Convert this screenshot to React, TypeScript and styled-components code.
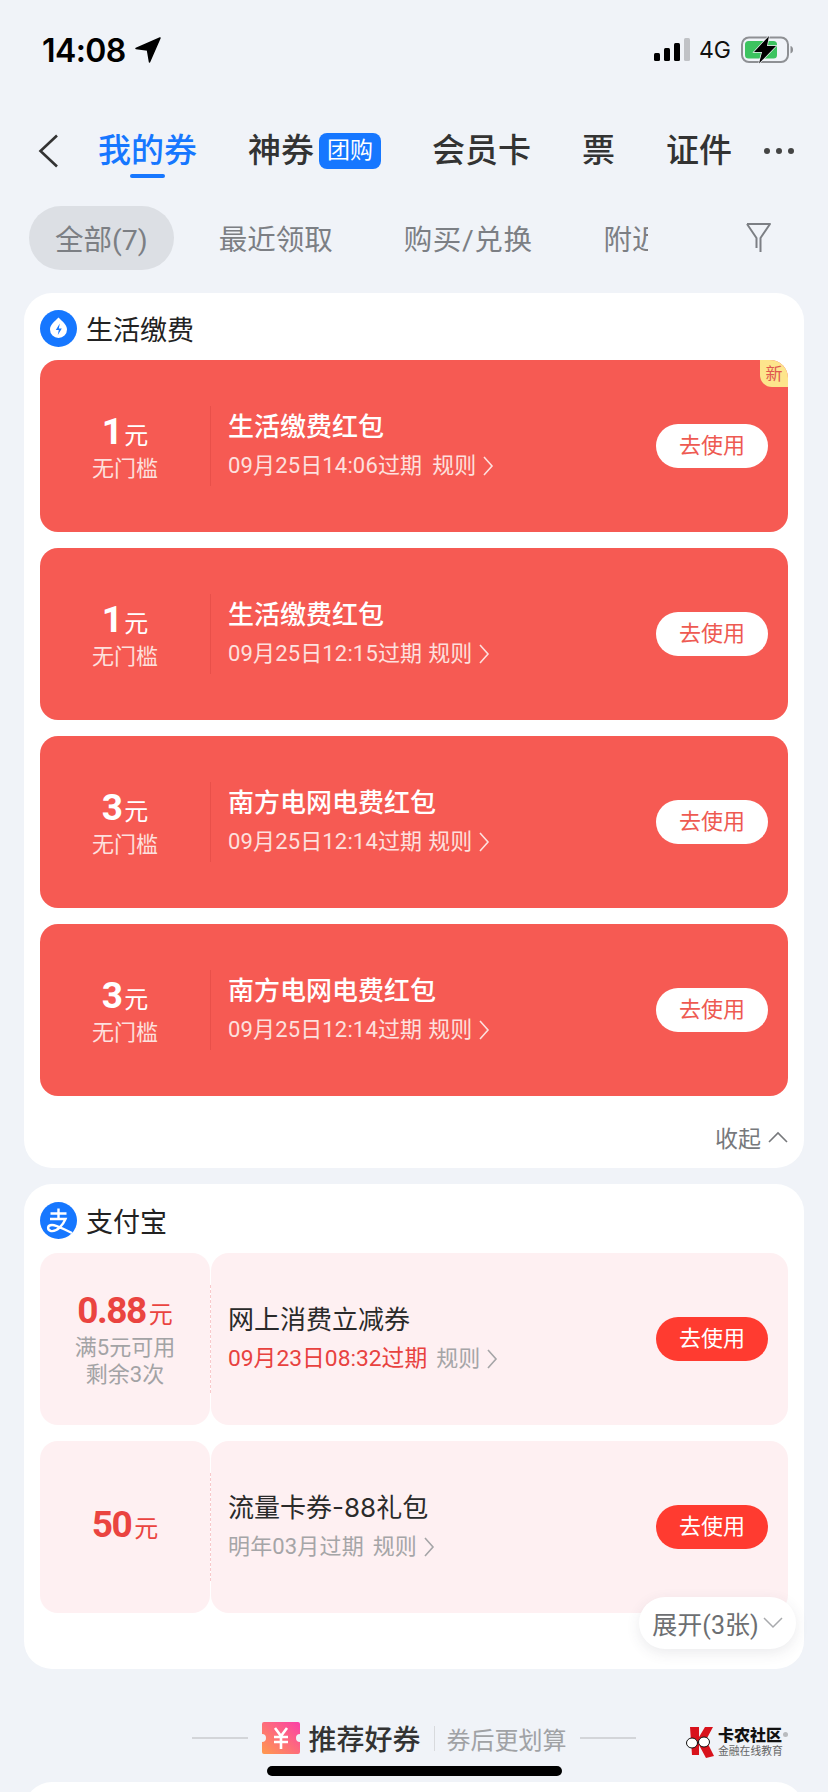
import React from "react";
import styled, { createGlobalStyle } from "styled-components";

const FONT = `Roboto, "Noto Sans CJK SC", sans-serif`;

const Global = createGlobalStyle`
  html, body { margin: 0; padding: 0; background: #f0f3f8; }
  body { font-family: ${FONT}; }
`;

const Screen = styled.div`
  position: relative;
  width: 828px;
  height: 1792px;
  overflow: hidden;
  background: #f0f3f8;
  color: #333;
`;

const StatusBar = styled.div`
  height: 100px;
  display: flex;
  align-items: center;
  padding: 0 33px 0 42px;
  box-sizing: border-box;
`;
const Time = styled.span`
  font-family: Inter, sans-serif;
  font-size: 32px;
  font-weight: 600;
  color: #000;
  letter-spacing: -0.6px;
`;
const LocationIcon = styled.svg`
  width: 26px;
  height: 26px;
  margin-left: 9px;
`;
const StatusRight = styled.div`
  margin-left: auto;
  display: flex;
  align-items: center;
`;
const Net = styled.span`
  font-family: Inter, sans-serif;
  font-size: 23px;
  font-weight: 400;
  color: #111;
  margin: 0 10px 0 8px;
`;

const Tabs = styled.div`
  height: 100px;
  display: flex;
  align-items: center;
  gap: 51px;
  padding: 1px 0 0 38px;
  box-sizing: border-box;
`;
const BackIcon = styled.svg`
  width: 21px;
  height: 34px;
  margin-right: -12px;
`;
const Tab = styled.div<{ $active?: boolean }>`
  position: relative;
  display: flex;
  align-items: center;
  font-size: 33px;
  line-height: 44px;
  font-weight: 500;
  color: ${(p) => (p.$active ? "#1677ff" : "#333")};
  ${(p) =>
    p.$active &&
    `&::after {
      content: "";
      position: absolute;
      left: 32px;
      width: 35px;
      height: 4px;
      top: 45px;
      border-radius: 2px;
      background: #1677ff;
    }`}
`;
const TabBadge = styled.span`
  margin-left: 5px;
  width: 62px;
  height: 36px;
  border-radius: 8px;
  background: #1677ff;
  color: #fff;
  font-size: 23px;
  font-weight: 400;
  line-height: 36px;
  text-align: center;
`;
const More = styled.div`
  margin-left: -19px;
  display: flex;
  gap: 6px;
  & > i {
    width: 6px;
    height: 6px;
    border-radius: 50%;
    background: #444;
  }
`;

const FilterRow = styled.div`
  margin-top: 6px;
  height: 64px;
  display: flex;
  align-items: center;
  padding-left: 29px;
`;
const FilterScroller = styled.div`
  width: 619px;
  display: flex;
  gap: 19px;
  overflow: hidden;
  flex: none;
`;
const Filter = styled.div<{ $on?: boolean; $wide?: boolean }>`
  flex: none;
  padding: 0 26px 2px;
  box-sizing: border-box;
  height: 64px;
  border-radius: 32px;
  display: flex;
  align-items: center;
  font-size: 28.5px;
  letter-spacing: ${(p) => (p.$wide ? "0.6px" : "0")};
  color: #7c7f84;
  white-space: nowrap;
  background: ${(p) => (p.$on ? "#dcdfe4" : "transparent")};
`;
const FunnelIcon = styled.svg`
  width: 27px;
  height: 32px;
  margin-left: 97px;
  flex: none;
`;

const Card = styled.section<{ $top: number; $bottom: number }>`
  margin: ${(p) => p.$top}px 24px 0;
  background: #fff;
  border-radius: 28px;
  padding: 0 16px ${(p) => p.$bottom}px;
`;
const CardHead = styled.div<{ $h: number }>`
  height: ${(p) => p.$h}px;
  padding-top: 3px;
  box-sizing: border-box;
  display: flex;
  align-items: center;
  gap: 9px;
  font-size: 27px;
  font-weight: 400;
  color: #222;
`;
const HeadIcon = styled.svg`
  width: 37px;
  height: 37px;
  flex: none;
`;
const CouponList = styled.div`
  display: flex;
  flex-direction: column;
  gap: 16px;
`;
const Coupon = styled.article<{ $light?: boolean }>`
  position: relative;
  height: 172px;
  display: flex;
  align-items: center;
  border-radius: 18px;
  background: ${(p) => (p.$light ? "transparent" : "#f65a53")};
  color: ${(p) => (p.$light ? "#333" : "#fff")};
`;
const Stub = styled.div<{ $light?: boolean }>`
  position: relative;
  width: 170px;
  height: 100%;
  flex: none;
  display: flex;
  flex-direction: column;
  align-items: center;
  justify-content: center;
  border-radius: 18px;
  background: ${(p) => (p.$light ? "#fef0f2" : "transparent")};
  ${(p) =>
    p.$light &&
    `&::after {
      content: "";
      position: absolute;
      right: -1px;
      top: 32px;
      bottom: 32px;
      border-right: 1px dashed #f8c9cb;
    }`}
`;
const Amount = styled.div<{ $light?: boolean }>`
  display: flex;
  align-items: baseline;
  justify-content: center;
  line-height: 42px;
  font-size: 37px;
  font-weight: 700;
  letter-spacing: -1.5px;
  color: ${(p) => (p.$light ? "#ea4440" : "#fff")};
  & > small {
    font-size: 24px;
    font-weight: 400;
    letter-spacing: 0;
    margin-left: 3px;
  }
`;
const StubNote = styled.div<{ $light?: boolean }>`
  font-size: 22px;
  line-height: 27px;
  margin-top: 0;
  text-align: center;
  color: ${(p) => (p.$light ? "#a3a3a5" : "#fde0de")};
  ${Amount} + & {
    margin-top: -2px;
  }
`;
const VDivider = styled.div`
  width: 1px;
  height: 80px;
  background: #e8504a;
  flex: none;
`;
const Body = styled.div<{ $light?: boolean }>`
  flex: 1;
  height: 100%;
  margin-left: ${(p) => (p.$light ? "1px" : "0")};
  padding: 0 20px 0 17px;
  display: flex;
  align-items: center;
  border-radius: 18px;
  background: ${(p) => (p.$light ? "#fef0f2" : "transparent")};
`;
const Info = styled.div`
  flex: 1;
  min-width: 0;
  padding-bottom: 3px;
`;
const Title = styled.div<{ $light?: boolean }>`
  font-size: 26px;
  line-height: 36px;
  font-weight: ${(p) => (p.$light ? 400 : 500)};
  white-space: nowrap;
  font-family: ${(p) => (p.$light ? `Inter, "Noto Sans CJK SC", sans-serif` : "inherit")};
  color: ${(p) => (p.$light ? "#2a2a2a" : "#fff")};
`;
const Meta = styled.div<{ $light?: boolean }>`
  margin-top: 6px;
  display: flex;
  align-items: center;
  font-size: 22px;
  line-height: 30px;
  color: ${(p) => (p.$light ? "#a5a5a7" : "#fde0de")};
`;
const Expiry = styled.span<{ $urgent?: boolean }>`
  color: ${(p) => (p.$urgent ? "#e8423f" : "inherit")};
  font-size: ${(p) => (p.$urgent ? "22.8px" : "22px")};
  letter-spacing: ${(p) => (p.$urgent ? "0" : "0.15px")};
  white-space: nowrap;
`;
const Rule = styled.span<{ $gap: number }>`
  margin-left: ${(p) => p.$gap}px;
  white-space: nowrap;
`;
const RuleChevron = styled.svg`
  width: 12px;
  height: 20px;
  margin-left: 6px;
`;
const UseButton = styled.div<{ $light?: boolean }>`
  width: 112px;
  height: 44px;
  border-radius: 22px;
  flex: none;
  text-align: center;
  line-height: 44px;
  font-size: 22px;
  background: ${(p) => (p.$light ? "#ff3b30" : "#fff")};
  color: ${(p) => (p.$light ? "#fff" : "#ee5a52")};
`;
const NewTag = styled.span`
  position: absolute;
  right: 0;
  top: 0;
  width: 28px;
  height: 27px;
  border-radius: 0 18px 0 12px;
  background: #fde58c;
  color: #e0584e;
  font-size: 17px;
  line-height: 28px;
  text-align: center;
`;
const Collapse = styled.div`
  height: 72px;
  padding-top: 10px;
  box-sizing: border-box;
  display: flex;
  align-items: center;
  justify-content: flex-end;
  gap: 7px;
  font-size: 23px;
  color: #77797c;
`;
const ChevronSmall = styled.svg`
  width: 20px;
  height: 12px;
`;
const Expand = styled.div`
  position: absolute;
  left: 639px;
  top: 1597px;
  width: 157px;
  height: 52px;
  border-radius: 26px;
  background: #fff;
  box-shadow: 0 4px 14px rgba(60, 60, 80, 0.1);
  display: flex;
  align-items: center;
  justify-content: center;
  gap: 4px;
  font-size: 25px;
  color: #6d6f72;
  white-space: nowrap;
`;
const Recommend = styled.div`
  margin-top: 49px;
  height: 40px;
  display: flex;
  align-items: center;
  justify-content: center;
`;
const Rule2 = styled.i`
  width: 56px;
  height: 2px;
  background: #d3d5d9;
`;
const TicketIcon = styled.svg`
  width: 40px;
  height: 32px;
  margin: 0 7px 0 13px;
`;
const RecTitle = styled.span`
  font-size: 28px;
  font-weight: 500;
  color: #333;
`;
const RecSep = styled.i`
  width: 1px;
  height: 25px;
  background: #d8dadd;
  margin: 0 12px 0 13px;
`;
const RecSub = styled.span`
  font-size: 24px;
  color: #a0a2a5;
  margin-right: 13px;
`;
const NextCard = styled.div`
  margin: 24px 24px 0;
  height: 60px;
  background: #fff;
  border-radius: 28px;
`;
const HomeBar = styled.div`
  position: absolute;
  left: 267px;
  top: 1766px;
  width: 295px;
  height: 10px;
  border-radius: 5px;
  background: #000;
`;
const Watermark = styled.div`
  position: absolute;
  left: 685px;
  top: 1725px;
  display: flex;
  align-items: center;
  gap: 2px;
`;
const MarkIcon = styled.svg`
  width: 31px;
  height: 33px;
`;
const MarkText = styled.div`
  display: flex;
  flex-direction: column;
`;
const MarkName = styled.span`
  font-size: 16px;
  line-height: 19px;
  font-weight: 900;
  color: #111;
  white-space: nowrap;
  &::after {
    content: "";
    display: inline-block;
    width: 5px;
    height: 5px;
    margin-left: 1px;
    border-radius: 50%;
    background: #b9bbbe;
    vertical-align: 4px;
  }
`;
const MarkSub = styled.span`
  font-size: 10.8px;
  line-height: 13px;
  color: #666;
  white-space: nowrap;
`;

const Chev = () => (
  <RuleChevron viewBox="0 0 12 20">
    <path d="M2 1l8 9-8 9" fill="none" stroke="currentColor" strokeWidth="1.6" />
  </RuleChevron>
);

type C = {
  amount: string;
  note?: string[];
  title: string;
  expiry: string;
  gap?: number;
  urgent?: boolean;
  isNew?: boolean;
};

const red: C[] = [
  { amount: "1", note: ["无门槛"], title: "生活缴费红包", expiry: "09月25日14:06过期", gap: 10, isNew: true },
  { amount: "1", note: ["无门槛"], title: "生活缴费红包", expiry: "09月25日12:15过期", gap: 6 },
  { amount: "3", note: ["无门槛"], title: "南方电网电费红包", expiry: "09月25日12:14过期", gap: 6 },
  { amount: "3", note: ["无门槛"], title: "南方电网电费红包", expiry: "09月25日12:14过期", gap: 6 },
];
const light: C[] = [
  { amount: "0.88", note: ["满5元可用", "剩余3次"], title: "网上消费立减券", expiry: "09月23日08:32过期", urgent: true, gap: 9 },
  { amount: "50", title: "流量卡券-88礼包", expiry: "明年03月过期", gap: 9 },
];

const CouponRow = ({ c, isLight }: { c: C; isLight?: boolean }) => (
  <Coupon $light={isLight}>
    <Stub $light={isLight}>
      <Amount $light={isLight}>
        {c.amount}
        <small>元</small>
      </Amount>
      {c.note?.map((n) => (
        <StubNote key={n} $light={isLight}>
          {n}
        </StubNote>
      ))}
    </Stub>
    {!isLight && <VDivider />}
    <Body $light={isLight}>
      <Info>
        <Title $light={isLight}>{c.title}</Title>
        <Meta $light={isLight}>
          <Expiry $urgent={c.urgent}>{c.expiry}</Expiry>
          <Rule $gap={c.gap ?? 8}>规则</Rule>
          <Chev />
        </Meta>
      </Info>
      <UseButton $light={isLight}>去使用</UseButton>
    </Body>
    {c.isNew && <NewTag>新</NewTag>}
  </Coupon>
);

export default function App() {
  return (
    <Screen>
      <Global />
      <StatusBar>
        <Time>14:08</Time>
        <LocationIcon viewBox="0 0 26 26">
          <path d="M25 1L1 11.500l11.500 1.600L14.500 25z" fill="#000" stroke="#000" strokeLinejoin="round" strokeWidth="1.500" />
        </LocationIcon>
        <StatusRight>
          <svg width="37" height="24" viewBox="0 0 37 24">
            <rect x="0" y="15" width="6" height="8" rx="1.500" fill="#000" />
            <rect x="10" y="10" width="6" height="13" rx="1.500" fill="#000" />
            <rect x="20" y="5" width="6" height="18" rx="1.500" fill="#000" />
            <rect x="30" y="0" width="6" height="23" rx="1.500" fill="#c0c2c6" />
          </svg>
          <Net>4G</Net>
          <svg width="54" height="28" viewBox="0 0 54 28">
            <rect x="1" y="1.500" width="46" height="24.500" rx="7" fill="none" stroke="#8e9094" strokeWidth="2" />
            <rect x="4" y="5" width="32" height="17.500" rx="3.500" fill="#3cc35f" />
            <path d="M49.500 10c2 .6 2.500 2.200 2.500 3.700s-.5 3.100-2.500 3.700z" fill="#8e9094" />
            <path d="M28 0L13 16h8l-3 11.500L35 10h-9z" fill="#000" stroke="#f0f3f8" strokeWidth="1.400" paintOrder="stroke" />
          </svg>
        </StatusRight>
      </StatusBar>

      <Tabs>
        <BackIcon viewBox="0 0 21 34">
          <path d="M19 1.500L2.500 17 19 32.500" fill="none" stroke="#333" strokeWidth="2.600" />
        </BackIcon>
        <Tab $active>我的券</Tab>
        <Tab>
          神券<TabBadge>团购</TabBadge>
        </Tab>
        <Tab>会员卡</Tab>
        <Tab>票</Tab>
        <Tab>证件</Tab>
        <More>
          <i />
          <i />
          <i />
        </More>
      </Tabs>

      <FilterRow>
        <FilterScroller>
          <Filter $on>全部(7)</Filter>
          <Filter>最近领取</Filter>
          <Filter $wide>购买/兑换</Filter>
          <Filter>附近</Filter>
        </FilterScroller>
        <FunnelIcon viewBox="0 0 27 32">
          <path d="M2 2h23L15.500 16v14M2 2l9.500 14v10" fill="none" stroke="#7c7f84" strokeWidth="2" strokeLinejoin="round" />
        </FunnelIcon>
      </FilterRow>

      <Card $top={23} $bottom={0}>
        <CardHead $h={67}>
          <HeadIcon viewBox="0 0 37 37">
            <circle cx="18.500" cy="18.500" r="18.500" fill="#1677ff" />
            <path d="M18.500 7.500c4 4 8.500 7.500 8.500 12a8.500 8.500 0 01-17 0c0-4.500 4.500-8 8.500-12z" fill="#fff" />
            <path d="M19.800 13.500l-4 6.500h3l-1 5 4-6.500h-3z" fill="#1677ff" />
          </HeadIcon>
          生活缴费
        </CardHead>
        <CouponList>
          {red.map((c, i) => (
            <CouponRow key={i} c={c} />
          ))}
        </CouponList>
        <Collapse>
          收起
          <ChevronSmall viewBox="0 0 20 12">
            <path d="M1 11l9-9 9 9" fill="none" stroke="#77797c" strokeWidth="1.600" />
          </ChevronSmall>
        </Collapse>
      </Card>

      <Card $top={16} $bottom={56}>
        <CardHead $h={69}>
          <HeadIcon viewBox="0 0 37 37">
            <circle cx="18.500" cy="18.500" r="18.500" fill="#1677ff" />
            <path d="M10.500 11.500h16M18.500 6.500v10M10 17h15.500C23 23 17 30 11 29c-4-1-4-6 1-6 5 0 11 4 20 8" fill="none" stroke="#fff" strokeWidth="2.400" />
          </HeadIcon>
          支付宝
        </CardHead>
        <CouponList>
          {light.map((c, i) => (
            <CouponRow key={i} c={c} isLight />
          ))}
        </CouponList>
      </Card>

      <Recommend>
        <Rule2 />
        <TicketIcon viewBox="0 0 40 32">
          <defs>
            <linearGradient id="tk" x1="0" y1="1" x2="1" y2="0">
              <stop offset="0" stopColor="#ff9a4d" />
              <stop offset="1" stopColor="#fb3fa8" />
            </linearGradient>
          </defs>
          <path d="M3 0h34a2 2 0 012 2v10a4 4 0 000 8v10a2 2 0 01-2 2H3a2 2 0 01-2-2V20a4 4 0 000-8V2a2 2 0 012-2z" fill="url(#tk)" />
          <path d="M14 6l6 8 6-8M13 15h14M13 20h14M20 14v13" fill="none" stroke="#fff" strokeWidth="2.600" />
        </TicketIcon>
        <RecTitle>推荐好券</RecTitle>
        <RecSep />
        <RecSub>券后更划算</RecSub>
        <Rule2 />
      </Recommend>
      <NextCard />

      <Expand>
        展开(3张)
        <ChevronSmall viewBox="0 0 20 12">
          <path d="M1 1l9 9 9-9" fill="none" stroke="#a8aaad" strokeWidth="1.500" />
        </ChevronSmall>
      </Expand>
      <Watermark>
        <MarkIcon viewBox="0 0 31 33">
          <path d="M5 2h9v10l6-10h8l-7 13 8 16-8 2-7-13v10H7z" fill="#d8121c" />
          <ellipse cx="7" cy="18" rx="5.500" ry="5" fill="#fff" stroke="#111" strokeWidth="1" />
          <ellipse cx="19" cy="17" rx="5.500" ry="5" fill="#fff" stroke="#111" strokeWidth="1" />
          <path d="M12.500 17.500l1-.5" stroke="#111" strokeWidth="1" />
        </MarkIcon>
        <MarkText>
          <MarkName>卡农社区</MarkName>
          <MarkSub>金融在线教育</MarkSub>
        </MarkText>
      </Watermark>
      <HomeBar />
    </Screen>
  );
}
